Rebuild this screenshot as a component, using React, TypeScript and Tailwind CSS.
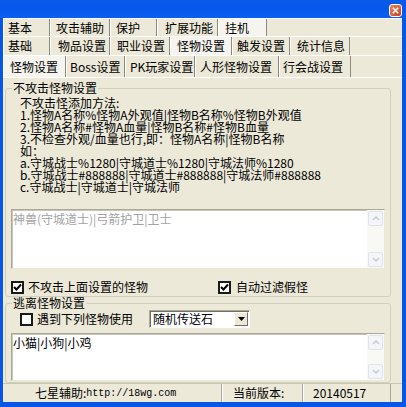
import React from "react";

const row1 = [
  { t: "基本", c: "w-[47px] pl-[5px]" },
  { t: "攻击辅助", c: "w-[60px] pl-[6px]" },
  { t: "保护", c: "w-[47px] pl-[6px]" },
  { t: "扩展功能", c: "w-[61px] pl-[8px]" },
  { t: "挂机", c: "w-[49px] pl-[7px]", sel: true },
];

const row2 = [
  { t: "基础", c: "w-[47px] pl-[5px]" },
  { t: "物品设置", c: "w-[60px] pl-[8px]" },
  { t: "职业设置", c: "w-[60px] pl-[7px]" },
  { t: "怪物设置", c: "w-[62px] pl-[7px]", sel: true },
  { t: "触发设置", c: "w-[58px] pl-[5px]" },
  { t: "统计信息", c: "w-[60px] pl-[7px]" },
];

const row3 = [
  { t: "怪物设置", c: "w-[63px] pl-[7px]", sel: true },
  { t: "Boss设置", c: "w-[59px] pl-[4px]" },
  { t: "PK玩家设置", c: "w-[70px] pl-[5px]" },
  { t: "人形怪物设置", c: "w-[84px] pl-[5px]" },
  { t: "行会战设置", c: "w-[72px] pl-[4px]" },
];

type Tab = { t: string; c: string; sel?: boolean };

const TabRow = ({ tabs, h }: { tabs: Tab[]; h: string }) => (
  <div className={`flex ${h} border-t border-white`}>
    {tabs.map((tab) => (
      <div
        key={tab.t}
        className={`${tab.c} h-full flex items-center whitespace-nowrap border-r border-[#8d8b80] shadow-[inset_1px_0_0_#ffffff] ${
          tab.sel ? "bg-[#f5f4ee]" : ""
        }`}
      >
        {tab.t}
      </div>
    ))}
  </div>
);

const Check = ({ checked }: { checked?: boolean }) => (
  <span className="w-[13px] h-[13px] shrink-0 border-2 border-[#1a1a1a] bg-white flex items-center justify-center">
    {checked && (
      <svg width="9" height="9" viewBox="0 0 9 9">
        <path d="M1 4 L3.5 6.5 L8 1.5" stroke="#000" strokeWidth="2" fill="none" />
      </svg>
    )}
  </span>
);

const Arrow = ({ up }: { up?: boolean }) => (
  <div className="h-[15px] mx-[1px] border border-[#dfe3ec] rounded-[2px] bg-[#f3f5f9] flex items-center justify-center">
    <svg width="8" height="5" viewBox="0 0 8 5">
      <path
        d={up ? "M1 4 L4 1 L7 4" : "M1 1 L4 4 L7 1"}
        stroke="#c4cbd9"
        strokeWidth="1.6"
        fill="none"
      />
    </svg>
  </div>
);

const ScrollBar = () => (
  <div className="w-[17px] h-full flex flex-col py-[1px] bg-[#f8f8f4]">
    <Arrow up />
    <div className="flex-1" />
    <Arrow />
  </div>
);

const Memo = ({ text, gray, h }: { text: string; gray?: boolean; h: string }) => (
  <div
    className={`${h} flex bg-white border border-t-[#aca899] border-l-[#aca899] border-b-[#ece9d8] border-r-[#ece9d8] shadow-[inset_1px_1px_0_#c9c6b8]`}
  >
    <div className={`flex-1 pl-[1px] pt-[3px] leading-[12px] ${gray ? "text-[#a3a3a3]" : "text-black"}`}>{text}</div>
    <ScrollBar />
  </div>
);

const lines = [
  "不攻击怪添加方法:",
  "1.怪物A名称%怪物A外观值|怪物B名称%怪物B外观值",
  "2.怪物A名称#怪物A血量|怪物B名称#怪物B血量",
  "3.不检查外观/血量也行,即：怪物A名称|怪物B名称",
  "如：",
  "a.守城战士%1280|守城道士%1280|守城法师%1280",
  "b.守城战士#888888|守城道士#888888|守城法师#888888",
  "c.守城战士|守城道士|守城法师",
];

export default function App() {
  return (
    <div className="w-[406px] h-[407px] flex flex-col bg-[#0756e6] overflow-hidden text-[12px] text-black font-['Noto_Sans_CJK_SC','Noto_Sans',sans-serif]">
      <div className="h-[18px] shrink-0 relative bg-gradient-to-b from-[#0a5ae8] via-[#0658ec] to-[#0b5fef]">
        <div className="absolute left-[389px] top-[4px] w-[13px] h-[13px] rounded-[3px] border border-white bg-gradient-to-br from-[#e9835f] to-[#c9411c] flex items-center justify-center">
          <svg width="7" height="7" viewBox="0 0 7 7">
            <path d="M0.8 0.8 L6.2 6.2 M6.2 0.8 L0.8 6.2" stroke="#fff" strokeWidth="1.6" />
          </svg>
        </div>
      </div>

      <div className="flex-1 ml-[3px] mr-[4px] mb-[5px] bg-[#ece9d8] flex flex-col">
        <TabRow tabs={row1} h="h-[18px]" />
        <TabRow tabs={row2} h="h-[19px]" />
        <TabRow tabs={row3} h="h-[22px]" />

        <div className="flex-1 flex flex-col px-[2px] border-t border-white">
          <fieldset className="mt-[4px] w-[386px] border border-[#d0d0bf] rounded-[3px] px-[5px] pt-[3px] pb-[2px]">
            <legend className="px-[1px] ml-[1px] leading-[12px]">不攻击怪物设置</legend>
            <div className="pl-[9px] leading-[12px] whitespace-nowrap">
              {lines.map((l) => (
                <div key={l}>{l}</div>
              ))}
            </div>
            <div className="mt-[16px]">
              <Memo text="神兽(守城道士)|弓箭护卫|卫士" gray h="h-[60px]" />
            </div>
            <div className="mt-[11px] h-[14px] flex items-center">
              <div className="w-[207px] flex items-center gap-[4px]">
                <Check checked />
                <span>不攻击上面设置的怪物</span>
              </div>
              <div className="flex items-center gap-[5px]">
                <Check checked />
                <span>自动过滤假怪</span>
              </div>
            </div>
          </fieldset>

          <fieldset className="w-[386px] border border-[#d0d0bf] rounded-[3px] px-[5px] pt-[1px] pb-[1px]">
            <legend className="px-[1px] ml-[1px] leading-[12px]">逃离怪物设置</legend>
            <div className="h-[18px] flex items-center">
              <div className="w-[138px] pl-[9px] flex items-center gap-[4px]">
                <Check />
                <span>遇到下列怪物使用</span>
              </div>
              <div className="w-[101px] h-[18px] flex items-center bg-white border border-t-[#aca899] border-l-[#aca899] border-b-white border-r-white shadow-[inset_1px_1px_0_#716f64]">
                <span className="flex-1 pl-[3px] leading-[12px]">随机传送石</span>
                <div className="w-[14px] h-[14px] mr-[1px] flex items-center justify-center bg-[#ece9d8] border border-t-white border-l-white border-b-[#716f64] border-r-[#716f64]">
                  <svg width="7" height="4" viewBox="0 0 7 4">
                    <path d="M0 0 H7 L3.5 4 Z" fill="#000" />
                  </svg>
                </div>
              </div>
            </div>
            <div className="mt-[5px]">
              <Memo text="小猫|小狗|小鸡" h="h-[48px]" />
            </div>
          </fieldset>
        </div>

        <div className="h-[19px] shrink-0 flex border-t border-[#c9c6b6]">
          <div className="w-[219px] flex items-center pl-[32px] border-r border-[#aca899]">
            七星辅助:<span className="font-['Liberation_Mono',monospace] text-[10px]">http://18wg.com</span>
          </div>
          <div className="w-[81px] flex items-center pl-[10px] border-l border-white border-r border-r-[#aca899]">
            当前版本:
          </div>
          <div className="w-[88px] flex items-center pl-[9px] border-l border-white border-r border-r-[#aca899]">
            20140517
          </div>
        </div>
      </div>
    </div>
  );
}
